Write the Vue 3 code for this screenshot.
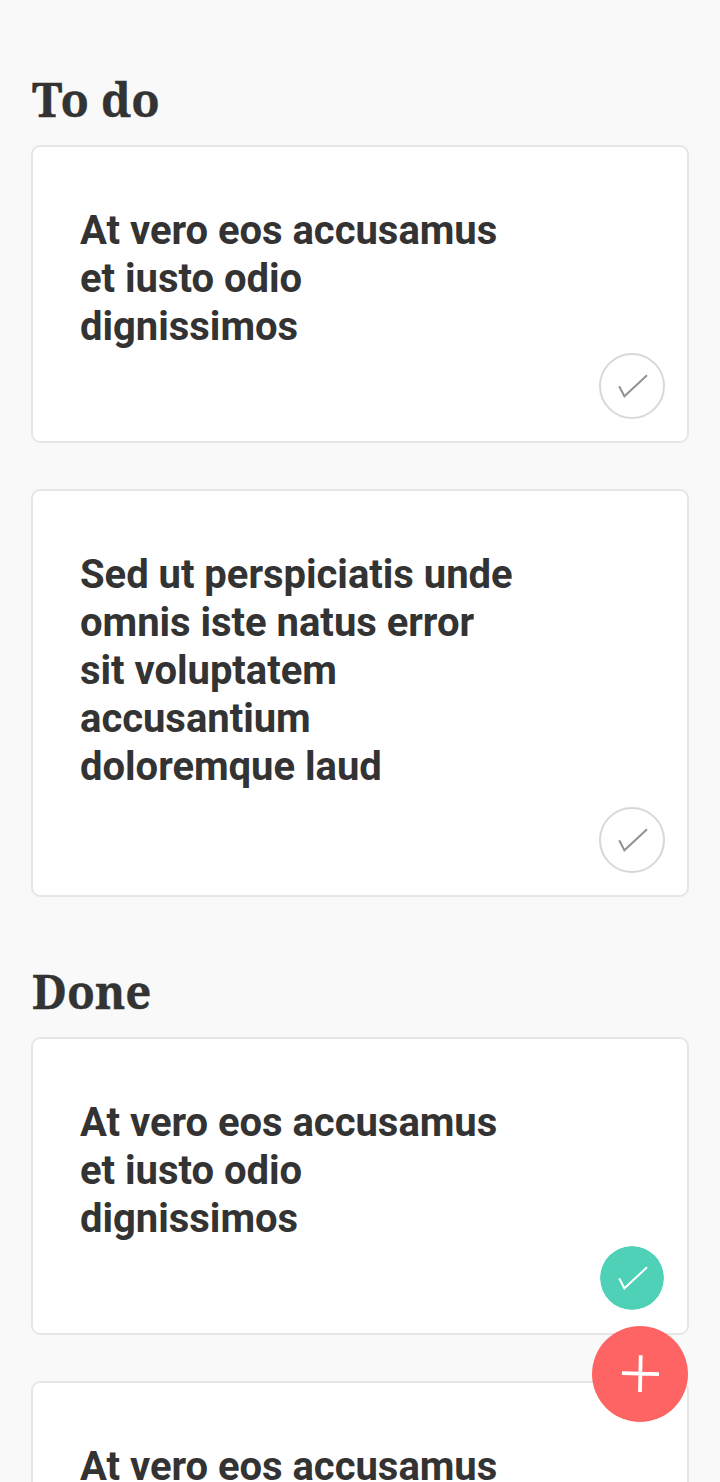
<script setup>
const sections = [
  { title: 'To do', items: [
    { lines: ['At vero eos accusamus', 'et iusto odio', 'dignissimos'], done: false },
    { lines: ['Sed ut perspiciatis unde', 'omnis iste natus error', 'sit voluptatem', 'accusantium', 'doloremque laud'], done: false, tall: true },
  ] },
  { title: 'Done', items: [
    { lines: ['At vero eos accusamus', 'et iusto odio', 'dignissimos'], done: true },
    { lines: ['At vero eos accusamus'], done: true },
  ] },
]
</script>

<template>
  <main class="screen">
    <section v-for="s in sections" :key="s.title" class="section">
      <h1 class="title"><span :class="['title-text', s.title === 'Done' ? 'title-done' : 'title-todo']">{{ s.title }}</span></h1>
      <article v-for="(item, i) in s.items" :key="i" :class="['card', { tall: item.tall }]">
        <p class="text"><span v-for="line in item.lines" :key="line" class="line">{{ line }}</span></p>
        <button :class="['check', { done: item.done }]" aria-label="Toggle">
          <svg width="66" height="66" viewBox="0 0 66 66"><path d="M20.2 33.2L25.4 43.3L48 22.3" fill="none" stroke="currentColor" stroke-width="2" /></svg>
        </button>
      </article>
    </section>
    <button class="fab" aria-label="Add">
      <svg width="96" height="96" viewBox="0 0 96 96"><path d="M30 47.2L67 48.1M48.7 29.2L48 66" fill="none" stroke="#fff" stroke-width="3.8" /></svg>
    </button>
  </main>
</template>

<style>
html, body { background: #f9f9f9; overflow: hidden; }
</style>

<style scoped>
.screen { position: relative; box-sizing: border-box; width: 720px; height: 1482px; overflow: hidden; padding: 64px 31px 0; background: #f9f9f9; color: #333; }
.section { margin-bottom: 59px; }
.title { margin: 0; height: 81px; font: bold 47px/70px "Noto Serif", "PT Serif", "Liberation Serif", serif; white-space: nowrap; padding-left: 1.4px; -webkit-text-stroke: 0.4px #333; }
.title-text { display: inline-block; transform-origin: left; }
.title-todo { transform: scaleX(0.988); }
.title-done { transform: scaleX(0.97); }
.card { box-sizing: border-box; display: flex; justify-content: space-between; height: 298px; margin-bottom: 46px; padding: 60px 22px 22px 47px; background: #fff; border: 2px solid #e6e6e6; border-radius: 9px; }
.card.tall { height: 408px; }
.text { margin: 0; font: bold 40px/48px Roboto, sans-serif; letter-spacing: -0.03px; white-space: nowrap; }
.line { display: block; }
.check { align-self: flex-end; box-sizing: border-box; width: 66px; height: 66px; padding: 0; border: 2px solid #d8d8d8; border-radius: 50%; background: #fff; color: #929292; }
.check svg { display: block; margin: -2px; }
.check.done { border: 1px solid #fff; background: #4fd1b8; background-clip: padding-box; color: #fff; }
.check.done svg { margin: -1px; }
.fab { position: absolute; left: 592px; top: 1326px; width: 96px; height: 96px; padding: 0; border: 0; border-radius: 50%; background: #ff6464; }
.fab svg { display: block; }
</style>
